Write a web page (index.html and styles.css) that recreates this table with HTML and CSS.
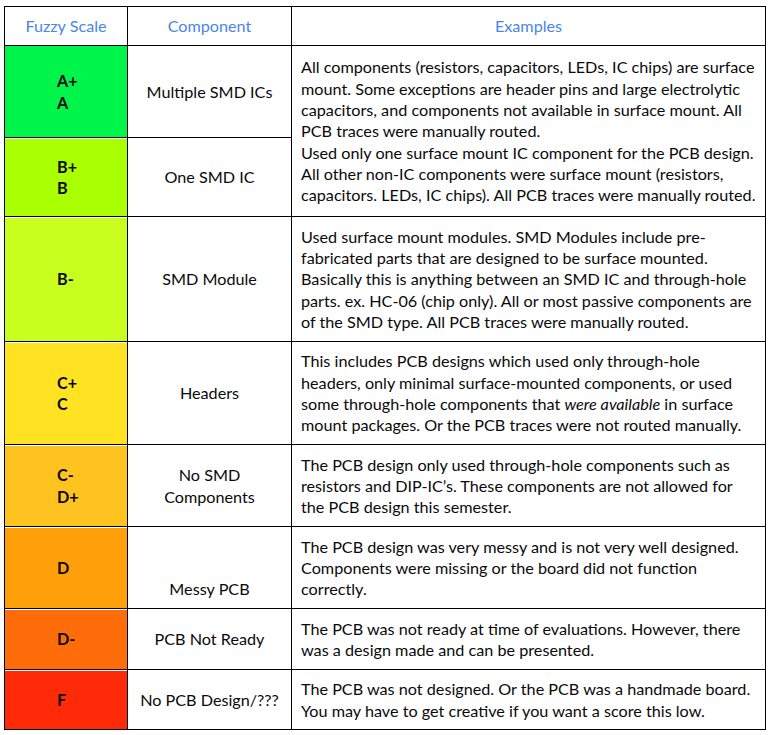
FILE: index.html
```html
<!DOCTYPE html>
<html>
<head>
<meta charset="utf-8">
<link rel="stylesheet" href="styles.css">
</head>
<body>
<table class="scale">
  <colgroup>
    <col class="c-grade">
    <col class="c-comp">
    <col class="c-ex">
  </colgroup>
  <thead>
    <tr class="r-head">
      <th>Fuzzy Scale</th>
      <th>Component</th>
      <th>Examples</th>
    </tr>
  </thead>
  <tbody>
    <tr class="r-a">
      <td class="grade g-a">A+<br>A</td>
      <td class="comp">Multiple SMD ICs</td>
      <td class="ex ex-merged" rowspan="2">All components (resistors, capacitors, LEDs, IC chips) are surface<br>mount. Some exceptions are header pins and large electrolytic<br>capacitors, and components not available in surface mount. All<br>PCB traces were manually routed.<br>Used only one surface mount IC component for the PCB design.<br>All other non-IC components were surface mount (resistors,<br>capacitors. LEDs, IC chips). All PCB traces were manually routed.</td>
    </tr>
    <tr class="r-b">
      <td class="grade g-b">B+<br>B</td>
      <td class="comp">One SMD IC</td>
    </tr>
    <tr class="r-bm">
      <td class="grade g-bm">B-</td>
      <td class="comp">SMD Module</td>
      <td class="ex">Used surface mount modules. SMD Modules include pre-<br>fabricated parts that are designed to be surface mounted.<br>Basically this is anything between an SMD IC and through-hole<br>parts. ex. HC-06 (chip only). All or most passive components are<br>of the SMD type. All PCB traces were manually routed.</td>
    </tr>
    <tr class="r-c">
      <td class="grade g-c">C+<br>C</td>
      <td class="comp">Headers</td>
      <td class="ex">This includes PCB designs which used only through-hole<br>headers, only minimal surface-mounted components, or used<br>some through-hole components that <em>were available</em> in surface<br>mount packages. Or the PCB traces were not routed manually.</td>
    </tr>
    <tr class="r-cm">
      <td class="grade g-cm">C-<br>D+</td>
      <td class="comp">No SMD<br>Components</td>
      <td class="ex">The PCB design only used through-hole components such as<br>resistors and DIP-IC’s. These components are not allowed for<br>the PCB design this semester.</td>
    </tr>
    <tr class="r-d">
      <td class="grade g-d">D</td>
      <td class="comp comp-bottom">Messy PCB</td>
      <td class="ex">The PCB design was very messy and is not very well designed.<br>Components were missing or the board did not function<br>correctly.</td>
    </tr>
    <tr class="r-dm">
      <td class="grade g-dm">D-</td>
      <td class="comp">PCB Not Ready</td>
      <td class="ex">The PCB was not ready at time of evaluations. However, there<br>was a design made and can be presented.</td>
    </tr>
    <tr class="r-f">
      <td class="grade g-f">F</td>
      <td class="comp">No PCB Design/???</td>
      <td class="ex">The PCB was not designed. Or the PCB was a handmade board.<br>You may have to get creative if you want a score this low.</td>
    </tr>
  </tbody>
</table>
</body>
</html>
```

FILE: styles.css
```css
html, body {
  margin: 0;
  padding: 0;
  background: #ffffff;
}

body {
  padding: 6px 0 0 4px;
  font-family: Lato, "Open Sans", sans-serif;
  font-size: 16.2px;
  color: #0a0a0a;
}

.scale {
  border-collapse: collapse;
  table-layout: fixed;
  width: 761px;
}

.c-grade { width: 123px; }
.c-comp { width: 164px; }
.c-ex { width: 474px; }

.scale th,
.scale td {
  border: 1px solid #000000;
  padding: 0;
  line-height: 21.3px;
  vertical-align: middle;
}

.scale th {
  font-weight: normal;
  color: #4a86e8;
  text-align: center;
}

.r-head { height: 39px; }
.r-a { height: 92px; }
.r-b { height: 79px; }
.r-bm { height: 125px; }
.r-c { height: 103px; }
.r-cm { height: 82px; }
.r-d { height: 82px; }
.r-dm { height: 61px; }
.r-f { height: 60px; }

.grade {
  font-weight: bold;
  padding-left: 52px !important;
  box-shadow: inset 0 1px 0 #ffffff;
}

.comp {
  text-align: center;
}

.comp-bottom {
  vertical-align: bottom !important;
  padding-bottom: 9px !important;
}

.ex {
  padding-left: 9px !important;
  white-space: nowrap;
}

.ex em {
  font-style: italic;
}

.g-a { background: #00f54a; box-shadow: none; }
.g-b { background: #aaff00; }
.g-bm { background: #c9ff1f; }
.g-c { background: #ffe322; }
.g-cm { background: #ffc31f; }
.g-d { background: #ffa00b; }
.g-dm { background: #ff6d0a; }
.g-f { background: #ff2a08; }
```
